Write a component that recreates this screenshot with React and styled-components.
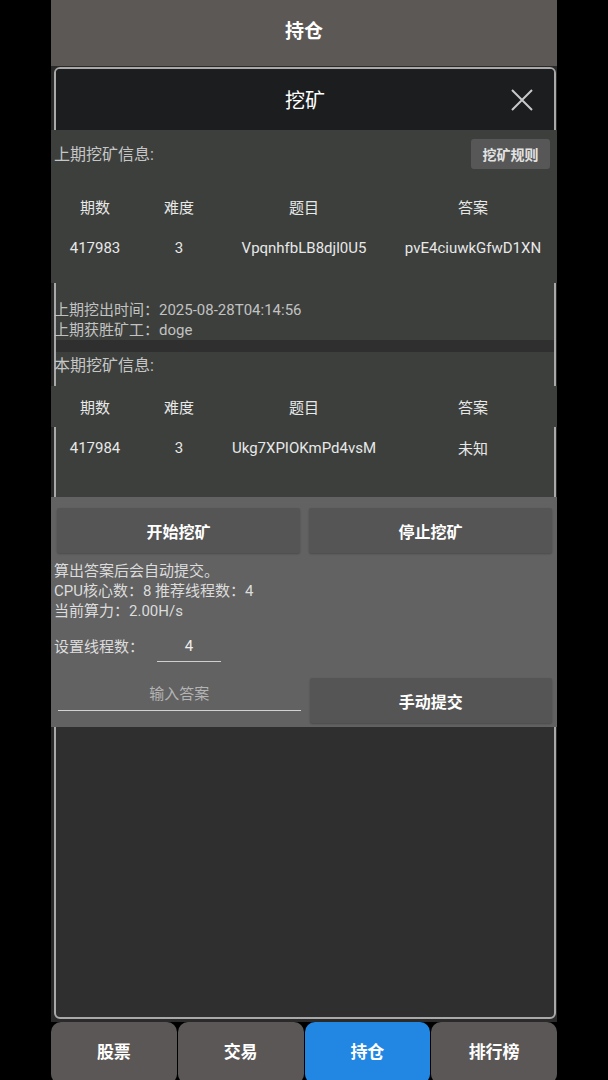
import React from "react";
import styled, { createGlobalStyle } from "styled-components";

const GlobalStyle = createGlobalStyle`
  html, body {
    margin: 0;
    padding: 0;
    background: #000;
    overflow: hidden;
  }
  body {
    font-family: Roboto, "Noto Sans CJK SC", sans-serif;
  }
  * {
    box-sizing: border-box;
  }
`;

const Column = styled.div`
  width: 506px;
  height: 1080px;
  margin: 0 auto;
  background: #2a2a2a;
  display: flex;
  flex-direction: column;
  overflow: hidden;
`;

const TopBar = styled.div`
  height: 66px;
  flex-shrink: 0;
  background: #5c5856;
  color: #fff;
  font-size: 19px;
  font-weight: 700;
  display: flex;
  align-items: center;
  justify-content: center;
  padding-bottom: 8px;
`;

const Modal = styled.div`
  height: 952px;
  flex-shrink: 0;
  margin: 1px 1px 0 3px;
  border: 2px solid #a9a9a9;
  border-radius: 6px;
  background: #2f2f2f;
  display: flex;
  flex-direction: column;
`;

const ModalHeader = styled.div`
  height: 61px;
  flex-shrink: 0;
  background: #1c1d1f;
  border-radius: 4px 4px 0 0;
  color: #fff;
  font-size: 20px;
  display: flex;
  align-items: center;
  justify-content: center;
  position: relative;
`;

const CloseButton = styled.button`
  position: absolute;
  right: 20px;
  top: 19px;
  width: 24px;
  height: 24px;
  padding: 0;
  border: none;
  background: none;
  display: flex;
`;

const Section = styled.div`
  background: #3c3f3c;
  margin-top: ${(p) => p.$gap || 0}px;
  padding-bottom: ${(p) => p.$pb || 0}px;
`;

const Wide = styled.div`
  background: #3c3f3c;
  margin: 0 -3px 0 -5px;
  padding-bottom: ${(p) => p.$pb || 0}px;
`;

const TitleRow = styled.div`
  height: ${(p) => p.$h}px;
  display: flex;
  align-items: center;
  justify-content: space-between;
  padding: 0 7px 0 3px;
`;

const Label = styled.span`
  color: #c6c6c6;
  font-size: 16px;
  margin-left: ${(p) => p.$ml || 0}px;
`;

const SmallButton = styled.button`
  height: 30px;
  width: 79px;
  border: none;
  border-radius: 3px;
  background: #575757;
  color: #e2e2e2;
  font-family: inherit;
  font-size: 14px;
  font-weight: 700;
  margin-top: 2px;
`;

const TableRow = styled.div`
  display: grid;
  grid-template-columns: 88px 80px 170px 1fr;
  height: 41px;
  align-items: center;
  margin-top: ${(p) => p.$mt || 0}px;
  margin-left: ${(p) => p.$ml || 0}px;
  margin-right: ${(p) => p.$mr || 0}px;
`;

const Cell = styled.span`
  text-align: center;
  color: #e8e8e8;
  font-size: 15px;
  white-space: nowrap;
`;

const InfoText = styled.div`
  color: ${(p) => p.$color || "#c2c2c2"};
  font-size: 15px;
  line-height: 20px;
  padding-top: ${(p) => p.$pt || 0}px;
  margin-left: ${(p) => p.$ml || 0}px;
`;

const Controls = styled.div`
  background: #626262;
  margin: 0 -3px 0 -5px;
  padding: 11px 5px 4px 0;
`;

const ButtonRow = styled.div`
  display: grid;
  grid-template-columns: 1fr 1fr;
  gap: 9px;
  padding-left: ${(p) => p.$pl}px;
  margin-top: ${(p) => p.$mt || 0}px;
  align-items: end;
`;

const ActionButton = styled.button`
  height: 45px;
  border: none;
  border-radius: 2px;
  background: #555555;
  box-shadow: 0 1px 2px rgba(0, 0, 0, 0.25);
  color: #fff;
  font-family: inherit;
  font-size: 16px;
  font-weight: 700;
`;

const Info = styled.div`
  padding: 8px 0 0 3px;
`;

const ThreadRow = styled.div`
  display: flex;
  align-items: center;
  height: 32px;
  margin-top: 10px;
  padding-left: 3px;
  gap: 13px;
`;

const ThreadInput = styled.div`
  width: 64px;
  height: 29px;
  border-bottom: 1.5px solid #cfcfcf;
  color: #eee;
  font-size: 15px;
  text-align: center;
  line-height: 26px;
`;

const AnswerInput = styled.div`
  height: 34px;
  border-bottom: 1.5px solid #d2d2d2;
  color: #b4b4b4;
  font-size: 15px;
  text-align: center;
  line-height: 34px;
  margin-bottom: 12px;
`;

const Tabs = styled.div`
  display: grid;
  grid-template-columns: repeat(4, 1fr);
  gap: 1px;
  margin-top: 3px;
  background: #000;
`;

const Tab = styled.div`
  height: 62px;
  padding-bottom: 6px;
  border-radius: 10px;
  background: ${(p) => (p.$active ? "#2187e3" : "#5a5756")};
  color: #fff;
  font-size: 17px;
  font-weight: 700;
  display: flex;
  align-items: center;
  justify-content: center;
`;

const columns = ["期数", "难度", "题目", "答案"];
const lastRound = ["417983", "3", "VpqnhfbLB8djl0U5", "pvE4ciuwkGfwD1XN"];
const thisRound = ["417984", "3", "Ukg7XPIOKmPd4vsM", "未知"];
const tabs = ["股票", "交易", "持仓", "排行榜"];

const CloseIcon = () => (
  <svg width="24" height="24" viewBox="0 0 24 24">
    <path d="M2 2 L22 22 M22 2 L2 22" stroke="#c9c9c9" strokeWidth="2" fill="none" />
  </svg>
);

export default function App() {
  return (
    <>
      <GlobalStyle />
      <Column>
        <TopBar>持仓</TopBar>
        <Modal>
          <ModalHeader>
            挖矿
            <CloseButton>
              <CloseIcon />
            </CloseButton>
          </ModalHeader>

          <Section>
            <Wide $pb={15}>
              <TitleRow $h={46}>
                <Label>上期挖矿信息:</Label>
                <SmallButton>挖矿规则</SmallButton>
              </TitleRow>
              <TableRow $mt={10}>
                {columns.map((c) => (
                  <Cell key={c}>{c}</Cell>
                ))}
              </TableRow>
              <TableRow>
                {lastRound.map((c, i) => (
                  <Cell key={i}>{c}</Cell>
                ))}
              </TableRow>
            </Wide>
            <InfoText $pt={17} $ml={-2}>
              上期挖出时间：2025-08-28T04:14:56
              <br />
              上期获胜矿工：doge
            </InfoText>
          </Section>

          <Section $gap={12} $pb={29}>
            <TitleRow $h={24}>
              <Label $ml={-5}>本期挖矿信息:</Label>
            </TitleRow>
            <Wide>
              <TableRow $mt={10}>
                {columns.map((c) => (
                  <Cell key={c}>{c}</Cell>
                ))}
              </TableRow>
            </Wide>
            <TableRow $ml={-5} $mr={-3}>
              {thisRound.map((c, i) => (
                <Cell key={i}>{c}</Cell>
              ))}
            </TableRow>
          </Section>

          <Controls>
            <ButtonRow $pl={6}>
              <ActionButton>开始挖矿</ActionButton>
              <ActionButton>停止挖矿</ActionButton>
            </ButtonRow>
            <Info>
              <InfoText $color="#dcdcdc">
                算出答案后会自动提交。
                <br />
                CPU核心数：8 推荐线程数：4
                <br />
                当前算力：2.00H/s
              </InfoText>
            </Info>
            <ThreadRow>
              <InfoText $color="#dcdcdc">设置线程数：</InfoText>
              <ThreadInput>4</ThreadInput>
            </ThreadRow>
            <ButtonRow $pl={7} $mt={14}>
              <AnswerInput>输入答案</AnswerInput>
              <ActionButton>手动提交</ActionButton>
            </ButtonRow>
          </Controls>
        </Modal>

        <Tabs>
          {tabs.map((t) => (
            <Tab key={t} $active={t === "持仓"}>
              {t}
            </Tab>
          ))}
        </Tabs>
      </Column>
    </>
  );
}
